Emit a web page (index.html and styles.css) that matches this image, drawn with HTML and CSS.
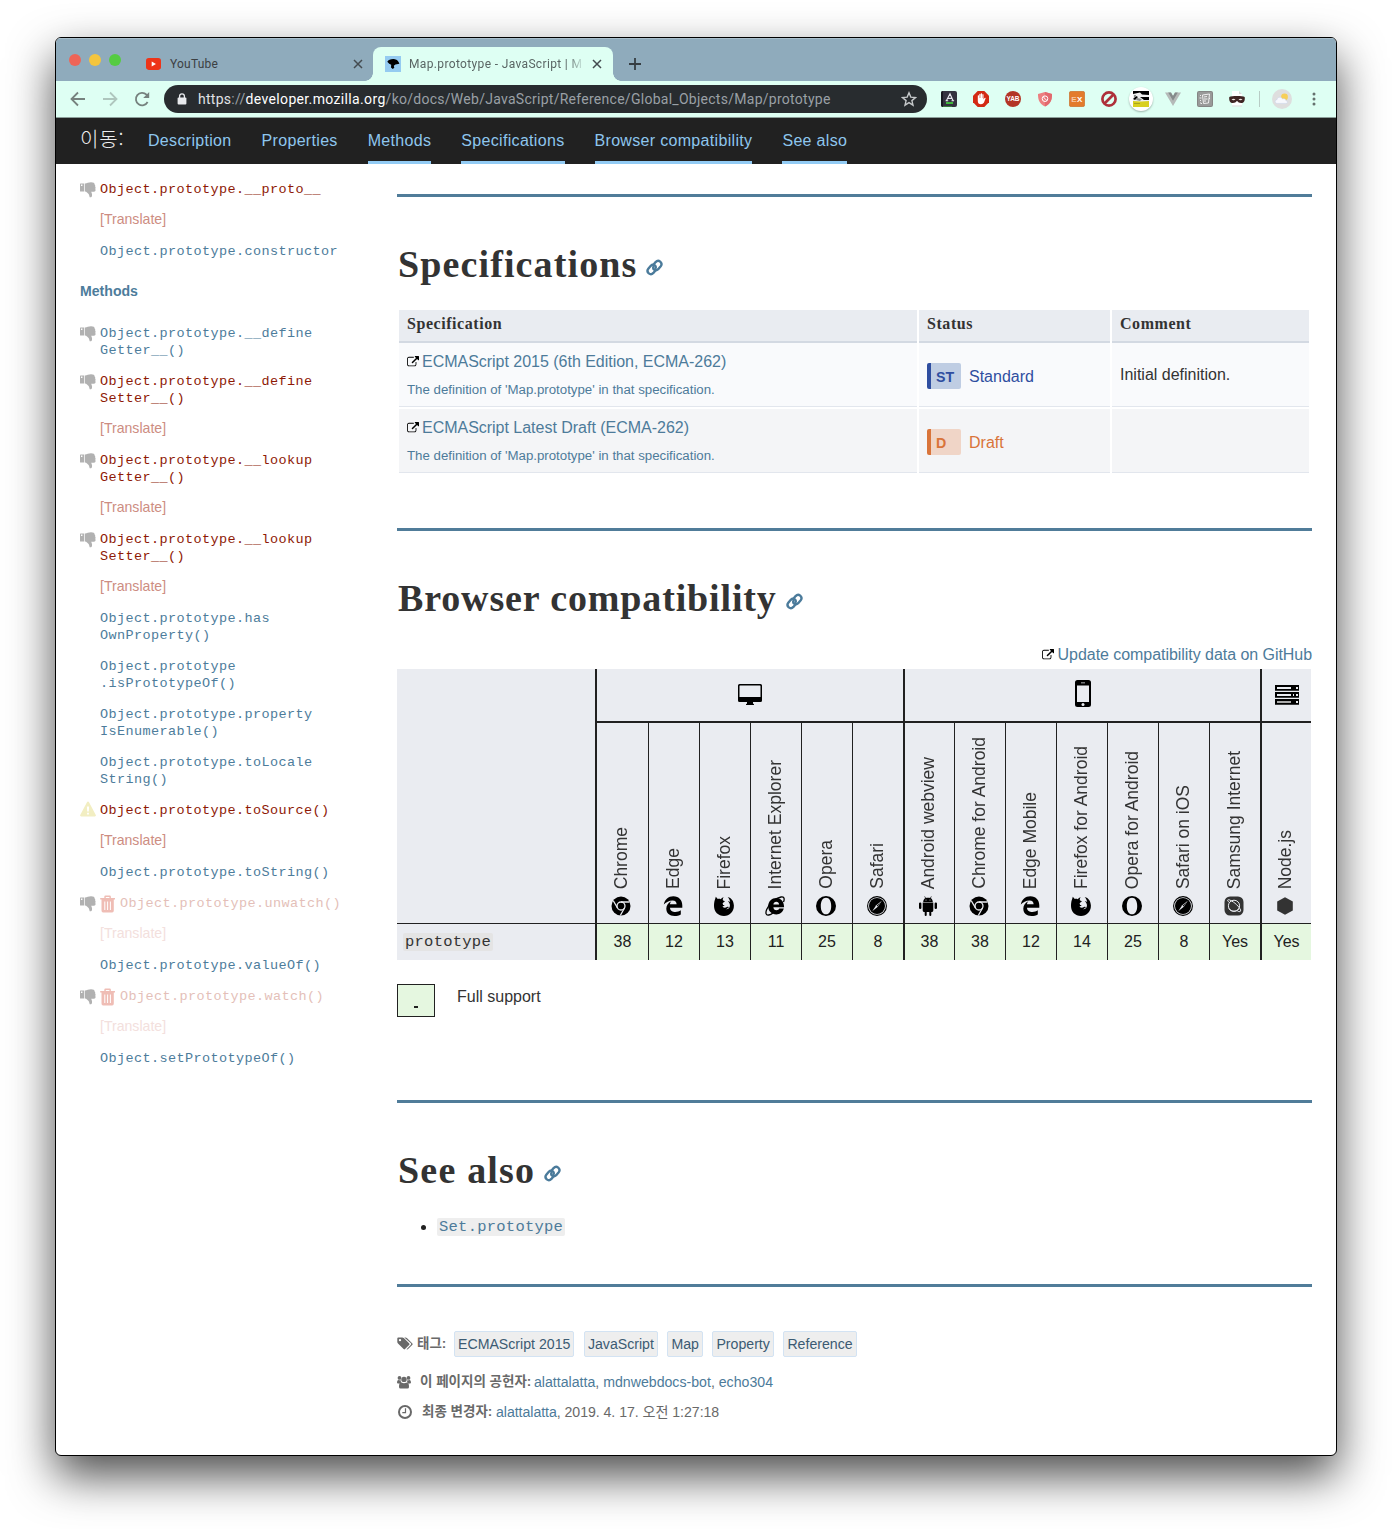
FILE: index.html
```html
<!DOCTYPE html>
<html lang="ko">
<head>
<meta charset="utf-8">
<title>Map.prototype - JavaScript | MDN</title>
<link rel="stylesheet" href="styles.css">
</head>
<body>
<svg width="0" height="0" class="defs">
  <symbol id="ext" viewBox="0 0 1792 1792"><path d="M1408 928v320q0 119-84.5 203.5t-203.5 84.5h-832q-119 0-203.5-84.5t-84.5-203.5v-832q0-119 84.5-203.5t203.5-84.5h704q14 0 23 9t9 23v64q0 14-9 23t-23 9h-704q-66 0-113 47t-47 113v832q0 66 47 113t113 47h832q66 0 113-47t47-113v-320q0-14 9-23t23-9h64q14 0 23 9t9 23zm384-864v512q0 26-19 45t-45 19-45-19l-176-176-652 652q-10 10-23 10t-23-10l-114-114q-10-10-10-23t10-23l652-652-176-176q-19-19-19-45t19-45 45-19h512q26 0 45 19t19 45z"/></symbol>
  <symbol id="link" viewBox="0 0 17 17"><g fill="none" stroke="#4b7b9b" stroke-width="2.400" stroke-linecap="round"><path d="M7.400 5.800L9.600 3.100Q11.800.8 14.200 2.600Q16.600 4.800 14.700 7.200L12.200 10.200Q10.300 12.100 8.100 10.600Q6.800 9.500 7.400 7.900"/><path d="M9.600 11.200L7.400 13.900Q5.200 16.200 2.800 14.400Q.4 12.200 2.300 9.800L4.800 6.800Q6.700 4.900 8.900 6.400Q10.200 7.500 9.600 9.100"/></g></symbol>
  <symbol id="down" viewBox="0 0 16 16"><path fill-rule="evenodd" d="M.5 1.500h3.800v8H.5Q0 9.500 0 9V2q0-.5.5-.5zM1 2.400v1.600h1.400V2.400z"/><path d="M5 1.600C7 1.500 8.500.3 11 .3c2.500 0 3.700.7 3.600 2.200.7.500.8 1.300.5 2 .6.700.6 1.500.2 2.200.7 1.700 0 3-1.500 3h-2.600c.3 1 1.200 2.200.8 4-.2 1.400-1.200 1.900-2.300 1.500-.5-1.200-.4-2.500-1.100-3.200C7.500 11 6.700 9.700 5 9.500z"/></symbol>
  <symbol id="trash" viewBox="0 0 16 18"><path fill-rule="evenodd" d="M4.300 3V1.700Q4.300.5 5.500.5h4.200q1.200 0 1.200 1.200V3H15v1.600h-1.200V15.500q0 2-1.600 2H3.100q-1.600 0-1.600-2V4.600H.2V3zm1.500 0h3.600V2H5.800zM4.300 6.500v8.500h1V6.500zm2.800 0v8.500h1V6.500zm2.800 0v8.500h1V6.500z"/></symbol>
  <symbol id="warn" viewBox="0 0 16 16"><path fill-rule="evenodd" d="M8 .5q.6 0 .9.600l6.900 12.900q.5 1.300-.9 1.400H1.100Q-.3 15.300.2 14L7.100 1.100Q7.400.5 8 .5zM6.900 5.500l.3 5h1.600l.3-5zM7.100 11.700v1.900h1.800v-1.900z"/></symbol>
  <symbol id="chrome" viewBox="0 0 20 20"><circle cx="10" cy="10" r="9.500"/><g fill="none" stroke="#eaecf1" stroke-width="1.300"><circle cx="10" cy="10" r="4"/><path d="M10 6h8.500M6.500 12L2.300 4.700M13.500 12l-4.200 7.500"/></g></symbol>
  <symbol id="edge" viewBox="0 0 20 20"><path d="M.8 8.600C1.800 3.500 5.400.3 10.300.3c5.800 0 9 4 9 9.200v2.200H7c.1 3 2.700 4.200 5.400 4.200 2.100 0 3.800-.6 5.400-1.600v4.200c-1.800 1-3.900 1.500-6.300 1.500-5 0-8.200-2.700-8.200-7.400 0-3.300 2-6 5-7.400C7.400 6.200 7 7.200 6.900 8.300h6.700c0-2.500-1.300-3.900-4-3.900C6 4.400 2.900 6 .8 8.600z"/></symbol>
  <symbol id="firefox" viewBox="0 0 20 20"><path d="M1 3.500L1.800.8l2 2.100C5 2.700 6 2.800 6.800 3.200 7.500 2 8.500 1.400 9.600 1.200c-.7.900-.9 1.800-.8 2.700 0 .8 2 .9 2 1.300-.1.900-1.800 1.200-2.200 2.200.2.700.6 1.100.4 1.700.8-.3 1.400 0 1.700.5-.9.2-1.300.8-2.300.9 1.200 1.400 3 1.600 4.500.6 1.200-.7 2.300-.1 2 .3-1.500.3-1.700 1.500-3.300 1.900 3 .2 4.600-1.700 4.300-4.500-.3-2-1.300-3-2.100-3.600 1.200 0 1.900.4 2.400.9C15.800 3.800 14.900 2 13.700.9c3.800.9 6 4 6.200 8.500C20.100 15.500 15.800 20 10 20S0 15.700 0 10c0-2.300.2-4.500 1-6.500z"/></symbol>
  <symbol id="ie" viewBox="0 0 20 20"><path fill-rule="evenodd" d="M3.200 10C3.400 5.200 6.900 2 11.200 2c4.900 0 7.900 3.600 7.900 9.300H8.400c.1 2 1.300 3 3 3 1.500 0 2.400-.7 2.900-1.700h4.500c-1 3.700-3.800 5.800-7.400 5.800-4.900 0-8.400-3.300-8.200-8.400zm5.200-1.600h5.700c-.2-1.600-1.200-2.600-2.800-2.600s-2.700 1-2.900 2.600z"/><path fill="none" stroke="#000" stroke-width="1.300" d="M18.500 6C20 2.200 18.800.5 16 1 11 2 4 8 1.700 13.500.2 17.200 1 19.700 3.800 19c1.400-.3 3-1.200 4.200-2.100"/></symbol>
  <symbol id="opera" viewBox="0 0 20 20"><path fill-rule="evenodd" d="M10 0a10 10 0 110 20 10 10 0 010-20zm0 1.700C6.700 1.700 4.800 5 4.800 10s1.900 8.300 5.200 8.300 5.200-3.300 5.200-8.300-1.900-8.300-5.200-8.300z"/></symbol>
  <symbol id="safari" viewBox="0 0 20 20"><circle cx="10" cy="10" r="9.400" fill="none" stroke="#000" stroke-width="1.100"/><circle cx="10" cy="10" r="8"/><path fill="#eaecf1" d="M14.800 4.800l-4 6-5.600 4.400 4-6z"/><path d="M9.600 9.800L13.800 6l-3.300 4.600z"/></symbol>
  <symbol id="android" viewBox="0 0 20 20"><path d="M5.200 5.900C5.300 4.200 6 3 7.200 2.300L6.400.5l.5-.2.900 1.800c1.300-.5 3.100-.5 4.400 0l.9-1.800.5.200-.8 1.800c1.200.7 1.900 1.900 2 3.600zM4.700 6.600h10.600v8q0 1.400-1.200 1.400h-.8v3q0 1-1 1t-1-1v-3H8.700v3q0 1-1 1t-1-1v-3h-.8q-1.200 0-1.200-1.400zM1 7.500q0-1 1.200-1t1.200 1v4.600q0 1-1.200 1T1 12.100zM16.600 7.500q0-1 1.200-1t1.200 1v4.600q0 1-1.200 1t-1.200-1z"/><circle cx="8" cy="4" r=".5" fill="#eaecf1"/><circle cx="12" cy="4" r=".5" fill="#eaecf1"/></symbol>
  <symbol id="samsung" viewBox="0 0 20 20"><rect x=".5" y=".5" width="19" height="19" rx="5.500" fill="#333"/><g fill="none" stroke="#eaecf1" stroke-width="1"><circle cx="10" cy="9.800" r="5.600"/><path d="M5.300 6.500C2.500 4.200 3.500 3 6 4.100c4.500 2 9.500 6.800 10.600 10 .4 1.800-1.200 1.900-3.200.9"/><path d="M4.600 12.500c3 3.600 7.600 3.400 10.400.3"/></g></symbol>
  <symbol id="node" viewBox="0 0 20 20"><path fill="#333" d="M10 1.200l7.800 4.400v8.800L10 18.800l-7.800-4.400V5.600z"/></symbol>
</svg>

<div class="window">
  <header class="tabstrip">
    <div class="lights"><i class="red"></i><i class="yellow"></i><i class="green"></i></div>
    <div class="tab idle">
      <svg class="yt" viewBox="0 0 14 11"><rect width="14" height="11" rx="2.600" fill="#ee3418"/><path fill="#fff" d="M5.300 3.200v4.600l4-2.300z"/></svg>
      <span class="tab-title">YouTube</span>
      <svg class="close" viewBox="0 0 10 10"><path d="M1 1l8 8M9 1L1 9"/></svg>
    </div>
    <div class="tab active">
      <svg class="fav" viewBox="0 0 16 16"><rect width="16" height="16" fill="#95cbf1"/><path d="M2.300 5.800C3.500 3.600 6.500 2.700 9.800 3.200c2.400.4 3.900 2.200 4.600 4.500l-4 .9-1.600 1.100.5 2.100-1.500 1.100L6 11.400l.2-2.600-2-1z"/></svg>
      <span class="tab-title fade">Map.prototype - JavaScript | M</span>
      <svg class="close" viewBox="0 0 10 10"><path d="M1 1l8 8M9 1L1 9"/></svg>
    </div>
    <svg class="plus" viewBox="0 0 12 12"><path d="M6 0v12M0 6h12"/></svg>
  </header>

  <div class="toolbar">
    <svg class="tool" viewBox="0 0 16 16"><path d="M15 8H2M8 1.500L1.500 8 8 14.500"/></svg>
    <svg class="tool dim" viewBox="0 0 16 16"><path d="M1 8h13M8 1.500L14.500 8 8 14.500"/></svg>
    <svg class="tool" viewBox="0 0 16 16"><path d="M13.600 11A6.200 6.200 0 1112.500 3.700L14.300 5.500"/><path class="solid" d="M15.200 1v6H9.200z"/></svg>
    <div class="omnibox">
      <svg class="lock" viewBox="0 0 10 12"><rect x=".6" y="4.500" width="8.800" height="7" rx="1" fill="#e8eaed"/><path fill="none" stroke="#e8eaed" stroke-width="1.300" d="M2.600 5V3.200a2.400 2.400 0 014.800 0V5"/></svg>
      <span class="url"><span class="scheme">https</span>://<b>developer.mozilla.org</b>/ko/docs/Web/JavaScript/Reference/Global_Objects/Map/prototype</span>
      <svg class="star" viewBox="0 0 16 16"><path d="M8 1.800l1.800 4.300 4.700.4-3.600 3.100 1.100 4.600L8 11.700l-4 2.500 1.100-4.600L1.500 6.500l4.700-.4z"/></svg>
    </div>
    <div class="extensions">
      <svg viewBox="0 0 16 16"><rect width="16" height="16" rx="2" fill="#33323f"/><path fill="#171920" d="M0 2q0-2 2-2v16q-2 0-2-2z"/><path fill="none" stroke="#e6e6ee" stroke-width="1.100" d="M5.500 9.500L9 2.800l3 6.700M6.800 7.400h4M4.600 9.700h2.600M10.500 9.700h2.600"/><path stroke="#45e33c" stroke-width="1.500" d="M5 12h7"/><path stroke="#377b3c" d="M2 15.500h9"/></svg>
      <svg viewBox="0 0 16 16"><path fill="#d32a14" d="M4.700 0h6.600L16 4.700v6.600L11.300 16H4.700L0 11.300V4.700z"/><path fill="#fff" d="M4.800 7.800V4.600q.6-.8 1.200 0V7h.3V3.200q.6-.8 1.200 0V7h.3V2.600q.6-.8 1.200 0V7h.3V3.500q.6-.8 1.200 0v5l1-1.600q.8-.6 1.200.2L11 11.600q-1 1.800-3.200 1.700Q4.900 13.200 4.800 10z"/></svg>
      <svg viewBox="0 0 16 16"><circle cx="8" cy="8" r="8" fill="#b33526"/><text x="8" y="10.300" class="badge-text yab">YAB</text></svg>
      <svg viewBox="0 0 16 16"><path fill="#ec7f80" d="M8 1l7 2c0 6-1.500 10-7 12.500C2.500 13 1 9 1 3z"/><path fill="#e2696e" d="M8 1l7 2c0 6-1.500 10-7 12.500z"/><g fill="none" stroke="#fff" stroke-width="1"><circle cx="8" cy="7.700" r="2.800"/><path d="M6.200 5.900l3.700 3.600"/></g></svg>
      <svg viewBox="0 0 16 16"><rect x=".3" y=".3" width="15.400" height="15.400" rx="2" fill="#e37b2c" stroke="#bf6926" stroke-width=".6"/><text x="5" y="11" class="badge-text ex pale">E</text><text x="10.600" y="11" class="badge-text ex">X</text></svg>
      <svg viewBox="0 0 16 16"><g fill="none" stroke="#ae303a" stroke-width="2.700"><circle cx="8" cy="8" r="6.600"/><path d="M12.500 3.500l-9 9"/></g></svg>
      <span class="round"><svg viewBox="0 0 16 16"><path d="M0 0h16v16H0z" fill="#eee"/><path d="M0 0h16v4L9 3.500 7 1.500 0 3zM7 6h9v3H11zM0 8l3-3 2 1-3 3z"/><path fill="#8b908c" d="M1 4h2v2H1zM4 7l5 1-2 2-4-1z"/><path fill="#d8cf1f" d="M0 10l8 .5 8-.5v6H0z"/><path fill="#a7a322" d="M1 12h6v1H1z"/></svg></span>
      <svg viewBox="0 0 16 16"><path fill="#b5bab8" d="M0 1.500h6L8 5l2-3.500h6L8 15z"/><path fill="#858b8b" d="M3.200 1.500H6L8 5l2-3.500h2.800L8 9.800z"/></svg>
      <svg viewBox="0 0 16 16"><rect width="16" height="16" rx="2" fill="#858685"/><rect x="1" y="1" width="14" height="14" rx="1" fill="#999a99"/><path fill="none" stroke="#f0f0f0" stroke-width="1" d="M5.500 4l7-1-1 9-5 .5zM7 6l3-.5M7 8h3.500M7 10h2M3 4l1 1M2.500 7h2M3 10l1-1M4 13l1-1M13 7l-1 1M3 12h1"/></svg>
      <svg viewBox="0 0 16 16"><path fill="#fff" d="M3 0h7l3 3v12.500H3z"/><path fill="#d5dcd9" d="M10 0l3 3h-3zM3 14.500h10v1H3z"/><path fill="#3e2423" d="M.3 6c2-1.200 13.400-1.200 15.400 0 .5 3-.6 5.800-2.500 6-2.700.4-3.800-.6-5.200-2.200-1.400 1.600-2.500 2.600-5.200 2.200C.9 11.800-.2 9 .3 6z"/><path fill="#f2e8e4" d="M2.500 8.500q2-1.700 4 0-2 1.500-4 0zM9.500 8.500q2-1.700 4 0-2 1.500-4 0z"/></svg>
    </div>
    <i class="divider"></i>
    <svg class="avatar" viewBox="0 0 20 20"><circle cx="10" cy="10" r="10" fill="#dedede"/><circle cx="12.500" cy="8" r="3.400" fill="#f7cf58"/><path fill="#f7f8fd" stroke="#c5cfe8" stroke-width=".5" d="M5.300 14.400C2.500 14.300 2.500 11 5 10.700 5.300 7.700 9.500 7.500 10.500 10c2-1 3.500.2 3.400 1.700 2.200.2 1.900 2.700 0 2.700z"/></svg>
    <svg class="menu" viewBox="0 0 4 14"><circle cx="2" cy="2" r="1.500"/><circle cx="2" cy="7" r="1.500"/><circle cx="2" cy="12" r="1.500"/></svg>
  </div>

  <nav class="jump">
    <span class="jump-label">이동:</span>
    <a>Description</a><a>Properties</a><a class="on">Methods</a><a class="on">Specifications</a><a class="on">Browser compatibility</a><a class="on">See also</a>
  </nav>

  <div class="page">
    <aside class="sidebar">
      <p class="missing"><svg class="mark"><use href="#down"/></svg>Object.prototype.__proto__</p>
      <p class="translate">[Translate]</p>
      <p>Object.prototype.constructor</p>
      <h4>Methods</h4>
      <p><svg class="mark"><use href="#down"/></svg>Object.prototype.__define<br>Getter__()</p>
      <p class="missing"><svg class="mark"><use href="#down"/></svg>Object.prototype.__define<br>Setter__()</p>
      <p class="translate">[Translate]</p>
      <p class="missing"><svg class="mark"><use href="#down"/></svg>Object.prototype.__lookup<br>Getter__()</p>
      <p class="translate">[Translate]</p>
      <p class="missing"><svg class="mark"><use href="#down"/></svg>Object.prototype.__lookup<br>Setter__()</p>
      <p class="translate">[Translate]</p>
      <p>Object.prototype.has<br>OwnProperty()</p>
      <p>Object.prototype<br>.isPrototypeOf()</p>
      <p>Object.prototype.property<br>IsEnumerable()</p>
      <p>Object.prototype.toLocale<br>String()</p>
      <p class="missing"><svg class="mark warn"><use href="#warn"/></svg>Object.prototype.toSource()</p>
      <p class="translate">[Translate]</p>
      <p>Object.prototype.toString()</p>
      <p class="gone"><svg class="mark"><use href="#down"/></svg><svg class="trash"><use href="#trash"/></svg>Object.prototype.unwatch()</p>
      <p class="translate faint">[Translate]</p>
      <p>Object.prototype.valueOf()</p>
      <p class="gone"><svg class="mark"><use href="#down"/></svg><svg class="trash"><use href="#trash"/></svg>Object.prototype.watch()</p>
      <p class="translate faint">[Translate]</p>
      <p>Object.setPrototypeOf()</p>
    </aside>

    <main>
      <section class="specs">
        <h2><span class="t-spec">Specifications</span><svg class="anchor"><use href="#link"/></svg></h2>
        <div class="spec-table">
          <div class="th">Specification</div><div class="th">Status</div><div class="th">Comment</div>
          <div class="td">
            <a class="spec-link"><svg class="ext"><use href="#ext"/></svg>ECMAScript 2015 (6th Edition, ECMA-262)</a>
            <small>The definition of 'Map.prototype' in that specification.</small>
          </div>
          <div class="td status standard"><b>ST</b><span>Standard</span></div>
          <div class="td comment">Initial definition.</div>
          <div class="td even">
            <a class="spec-link"><svg class="ext"><use href="#ext"/></svg>ECMAScript Latest Draft (ECMA-262)</a>
            <small>The definition of 'Map.prototype' in that specification.</small>
          </div>
          <div class="td even status draft"><b>D</b><span>Draft</span></div>
          <div class="td even"></div>
        </div>
      </section>

      <section class="compat">
        <h2><span class="t-compat">Browser compatibility</span><svg class="anchor"><use href="#link"/></svg></h2>
        <a class="update"><svg class="ext"><use href="#ext"/></svg>Update compatibility data on GitHub</a>
        <div class="compat-table">
          <div class="corner"></div>
          <div class="platform desktop"><svg width="24" height="22" viewBox="0 0 24 22"><path fill-rule="evenodd" d="M1.500 0h21Q24 0 24 1.500v15q0 1.500-1.500 1.500H15v1.500l1 .7V21H8v-.8l1-.7V18H1.500Q0 18 0 16.500v-15Q0 0 1.500 0zM2 1.500q-.5 0-.5.500v11h21V2q0-.5-.5-.5z"/></svg></div>
          <div class="platform mobile"><svg width="16" height="27" viewBox="0 0 16 27"><path fill-rule="evenodd" d="M2.500 0h11Q16 0 16 2.500v22q0 2.500-2.500 2.500h-11Q0 27 0 24.500v-22Q0 0 2.500 0zM2 5.500v16.500h12V5.500zM6 2.500v.8h4v-.8z"/><circle cx="8" cy="24.500" r="1.500" fill="#eaecf1"/></svg></div>
          <div class="platform server"><svg width="24" height="20" viewBox="0 0 24 20"><path d="M0 0h24v5.800H0zM0 7h24v5.800H0zM0 14h24v5.800H0z"/><path fill="#eaecf1" d="M2 2h14v2H2zM2 9h14v2H2zM21 2h2v2h-2zM18 9h1v2H18zM21 9h2v2h-2zM21 16h2v2h-2z"/><path fill="#aaa" d="M2 16h14v2H2z"/></svg></div>

          <div class="browser group"><span>Chrome</span><svg><use href="#chrome"/></svg></div>
          <div class="browser"><span>Edge</span><svg><use href="#edge"/></svg></div>
          <div class="browser"><span>Firefox</span><svg><use href="#firefox"/></svg></div>
          <div class="browser"><span>Internet Explorer</span><svg><use href="#ie"/></svg></div>
          <div class="browser"><span>Opera</span><svg><use href="#opera"/></svg></div>
          <div class="browser"><span>Safari</span><svg><use href="#safari"/></svg></div>
          <div class="browser group"><span>Android webview</span><svg><use href="#android"/></svg></div>
          <div class="browser"><span>Chrome for Android</span><svg><use href="#chrome"/></svg></div>
          <div class="browser"><span>Edge Mobile</span><svg><use href="#edge"/></svg></div>
          <div class="browser"><span>Firefox for Android</span><svg><use href="#firefox"/></svg></div>
          <div class="browser"><span>Opera for Android</span><svg><use href="#opera"/></svg></div>
          <div class="browser"><span>Safari on iOS</span><svg><use href="#safari"/></svg></div>
          <div class="browser"><span>Samsung Internet</span><svg><use href="#samsung"/></svg></div>
          <div class="browser group"><span>Node.js</span><svg><use href="#node"/></svg></div>

          <div class="feature"><code>prototype</code></div>
          <div class="yes group">38</div><div class="yes">12</div><div class="yes">13</div><div class="yes">11</div><div class="yes">25</div><div class="yes">8</div>
          <div class="yes group">38</div><div class="yes">38</div><div class="yes">12</div><div class="yes">14</div><div class="yes">25</div><div class="yes">8</div><div class="yes">Yes</div>
          <div class="yes group">Yes</div>
        </div>
        <div class="legend"><i><span></span></i><p>Full support</p></div>
      </section>

      <section class="see">
        <h2><span class="t-see">See also</span><svg class="anchor"><use href="#link"/></svg></h2>
        <div class="bullet"><i></i><code>Set.prototype</code></div>
      </section>

      <footer>
        <div class="tags">
          <svg viewBox="0 0 16 14"><path fill-rule="evenodd" d="M.3 1.500Q.3.5 1.300.5h4q.9 0 1.500.6l5.500 5.300q.6.700 0 1.400l-4.300 4.300q-.7.600-1.400 0L1 6.600q-.7-.7-.7-1.500zM3 1.900a1.200 1.200 0 100 2.400 1.200 1.200 0 000-2.400z"/><path d="M7.300.5h1.100q.9 0 1.500.6l5.500 5.300q.6.700 0 1.400l-4.300 4.300q-.8.700-1.500.1l4.300-4.400q.7-.7 0-1.500z"/></svg>
          <b>태그:</b><a>ECMAScript 2015</a><a>JavaScript</a><a>Map</a><a>Property</a><a>Reference</a>
        </div>
        <div class="meta people">
          <svg viewBox="0 0 14 14"><circle cx="2.500" cy="2.900" r="1.900"/><circle cx="11.500" cy="2.900" r="1.900"/><circle cx="7" cy="4.400" r="2.700"/><path d="M0 7.500Q0 4.700 1.500 4.900q1 .6 2.200.3-.2 1.500.9 2.500-1.400 0-2 .8H1q-1 0-1-1zM14 7.500q0-2.800-1.500-2.600-1 .6-2.200.3.2 1.500-.9 2.500 1.400 0 2 .8H13q1 0 1-1zM2 12q-.1-4.600 2.400-4.500 2.600 1.500 5.200 0Q12.100 7.400 12 12q0 1.500-1.500 1.500h-7Q2 13.500 2 12z"/></svg>
          <b>이 페이지의 공헌자:</b><p><a>alattalatta</a>, <a>mdnwebdocs-bot</a>, <a>echo304</a></p>
        </div>
        <div class="meta date">
          <svg viewBox="0 0 14 14"><g fill="none" stroke="#696969"><circle cx="7" cy="7" r="6" stroke-width="2"/><path stroke-width="1.200" d="M7.500 3.300v4.300H4.300"/></g></svg>
          <b>최종 변경자:</b><p><a>alattalatta</a>, 2019. 4. 17. 오전 1:27:18</p>
        </div>
      </footer>
    </main>
  </div>
</div>
</body>
</html>
```

FILE: styles.css
```css
* { box-sizing: border-box; }
body {
  margin: 0;
  padding: 37px 55px 73px;
  background: #fff;
  color: #333;
  font: 16px/24px "Liberation Sans", "Noto Sans CJK KR", sans-serif;
  overflow: hidden;
}
p, h2, h4 { margin: 0; }
svg { display: block; flex: none; }
.defs { position: absolute; }
a { color: #4d7b9a; }
.window {
  width: 1282px;
  height: 1419px;
  border: 1px solid #000;
  border-radius: 6px;
  background: #fff;
  overflow: hidden;
  box-shadow: 0 20px 46px rgba(0, 0, 0, .7);
}

/* Tabs */
.tabstrip {
  display: flex;
  height: 43px;
  background: #8fabbc;
  border-top: 1px solid #a9bfcc;
  font: 12px/16px Roboto, sans-serif;
  letter-spacing: .3px;
  color: #3c4043;
}
.lights { display: flex; gap: 8px; padding: 15px 0 0 13px; width: 81px; }
.lights i { width: 12px; height: 12px; border-radius: 50%; }
.red { background: #ee6457; }
.yellow { background: #f4c53d; }
.green { background: #55cc42; }
.tab { display: flex; align-items: center; height: 34px; margin-top: 8px; }
.idle { width: 236px; padding: 0 10px 0 9px; }
.yt { width: 15px; height: 12px; margin-right: 9px; }
.tab-title { flex: 1; white-space: nowrap; }
.idle .tab-title { letter-spacing: .2px; }
.close { width: 10px; height: 10px; fill: none; stroke: #444b50; stroke-width: 1.500; }
.active {
  width: 240px;
  padding: 0 11px 0 12px;
  border-radius: 8px 8px 0 0;
  background: #defff3;
  position: relative;
  color: #5a6664;
}
.active::before, .active::after {
  content: "";
  position: absolute;
  bottom: 0;
  width: 8px;
  height: 8px;
}
.active::before { left: -8px; background: radial-gradient(circle at 0 0, transparent 7.500px, #defff3 8px); }
.active::after { right: -8px; background: radial-gradient(circle at 100% 0, transparent 7.500px, #defff3 8px); }
.fav { width: 16px; height: 16px; margin-right: 8px; }
.fade {
  width: 176px;
  margin-right: 7px;
  letter-spacing: .35px;
  -webkit-mask-image: linear-gradient(90deg, #000 90%, transparent);
  mask-image: linear-gradient(90deg, #000 90%, transparent);
}
.plus { width: 12px; height: 12px; margin: 19px 0 0 16px; stroke: #353d42; stroke-width: 1.800; }

/* Toolbar */
.toolbar {
  display: flex;
  align-items: center;
  height: 37px;
  padding-left: 14px;
  background: #defff3;
  border-bottom: 1px solid #8c9f99;
}
.tool { width: 16px; height: 16px; margin-right: 16px; fill: none; stroke: #76827e; stroke-width: 1.800; }
.tool .solid { fill: #76827e; stroke: none; }
.dim { opacity: .45; }
.omnibox {
  display: flex;
  align-items: center;
  width: 763px;
  height: 28px;
  margin-left: -2px;
  padding: 0 10px 0 13px;
  border-radius: 14px;
  background: #282c2f;
  color: #9aa0a6;
}
.lock { width: 10px; height: 12px; margin-right: 11px; }
.url { flex: 1; white-space: nowrap; font: 14px/20px Roboto, sans-serif; letter-spacing: .27px; }
.url b { font-weight: 400; color: #fff; letter-spacing: .35px; }
.scheme { color: #e0e2e5; }
.star { width: 16px; height: 16px; fill: none; stroke: #c5c8ca; stroke-width: 1.400; }
.extensions { display: flex; gap: 16px; align-items: center; margin-left: 14px; }
.extensions svg { width: 16px; height: 16px; }
.round {
  width: 24px;
  height: 24px;
  margin: 0 -4px;
  padding: 4px;
  border-radius: 50%;
  background: #fff;
  box-shadow: 0 1px 2px rgba(0, 0, 0, .3);
}
.badge-text { fill: #fff; font: 900 6.500px "Liberation Sans", sans-serif; text-anchor: middle; }
.ex { font-size: 8px; }
.pale { fill: #f6c9a4; }
.divider { width: 1px; height: 16px; margin: 0 12px 0 14px; background: #b8ccc5; }
.avatar { width: 20px; height: 20px; }
.menu { width: 4px; height: 14px; margin-left: 20px; fill: #65706d; }

/* Section links */
.jump {
  display: flex;
  gap: 30px;
  height: 46px;
  padding-left: 24px;
  background: #212121;
  line-height: 45px;
  letter-spacing: .32px;
}
.jump a { height: 46px; white-space: nowrap; color: #8ec6ee; }
.jump .on { border-bottom: 3px solid #92cbf4; }
.jump-label { width: 38px; color: #eee; font-size: 20px; font-weight: 300; line-height: 42px; white-space: nowrap; font-family: "Noto Sans CJK KR", sans-serif; letter-spacing: .8px; }

/* Sidebar */
.page { display: flex; }
.sidebar { width: 341px; padding: 17px 0 0 44px; color: #4d7c9b; font: 13.500px/17px "Courier New", "Liberation Mono", monospace; letter-spacing: .4px; }
.sidebar p { position: relative; margin-bottom: 14px; white-space: nowrap; }
.sidebar h4 { margin: 22.500px 0 25.500px -20px; font: 700 14.100px/17px "Liberation Sans", sans-serif; letter-spacing: 0; }
.sidebar .missing { color: #8e1905; }
.sidebar .translate { top: -1px; color: #cd8d82; font: 14.100px/17px "Liberation Sans", sans-serif; letter-spacing: 0; }
.sidebar .faint { color: #f3e0dd; }
.sidebar .gone { padding-left: 20px; color: #e4bfb9; }
.mark { position: absolute; left: -20px; top: 1px; width: 16px; height: 16px; fill: #b1b1b1; }
.mark.warn { top: -1px; fill: #f2eec2; }
.trash { position: absolute; left: 0; top: 0; width: 16px; height: 18px; fill: #efbdb5; }

/* Article */
main { width: 915px; padding-top: 30px; }
section { padding-top: 47px; border-top: 3px solid #507c99; }
.specs { height: 334px; }
.compat { height: 572px; }
.see { height: 184px; }
h2 { display: flex; height: 40px; padding-left: 1px; font: 700 38px/40px Palatino, "Palatino Linotype", "Liberation Serif", serif; }
.t-spec { width: 248px; letter-spacing: 1.120px; }
.t-compat { width: 388px; letter-spacing: .860px; }
.t-see { width: 146px; letter-spacing: 1.200px; }
.anchor { width: 17px; height: 17px; margin-top: 15px; }
.ext { width: 12px; height: 12px; fill: #000; }
code { font: 15.500px/18px "Courier New", "Liberation Mono", monospace; letter-spacing: .25px; padding: 0 2px; background: #e4e4e4; border-radius: 2px; }

.spec-table { display: grid; grid-template-columns: 518px 191px 197px; grid-template-rows: 33px 64px 64px; column-gap: 2px; margin: 26px 0 0 2px; }
.th { padding-left: 8px; background: #e9ecf1; border-bottom: 2px solid #d3d9e2; font: 700 16px/28px Palatino, "Liberation Serif", serif; letter-spacing: .55px; }
.td { display: flex; flex-direction: column; padding-left: 8px; background: #f9fafc; border-bottom: 1px solid #e2e6ed; }
.even { background: #f4f5f7; margin-top: 2px; margin-bottom: -2px; }
.spec-link { display: flex; align-items: center; gap: 3px; height: 24px; margin-top: 7px; white-space: nowrap; letter-spacing: -.02px; }
.spec-link svg { margin-top: -1px; }
small { margin-top: 6px; font-size: 13.250px; line-height: 20px; color: #4d7b9a; white-space: nowrap; }
.status { flex-direction: row; align-items: center; padding-top: 3px; }
.status b { width: 34px; height: 26px; margin-right: 8px; padding-left: 5px; border-left: 4px solid; border-radius: 2px; font-size: 14.220px; line-height: 28px; }
.status span { padding-top: 2px; }
.standard { color: #2f4ea0; }
.standard b { background: #bfcde3; }
.draft { color: #d9743a; }
.draft b { background: #f0d5c7; }
.comment { justify-content: center; }

.update { display: flex; align-items: center; justify-content: flex-end; gap: 4px; height: 24px; margin: 25px 0 2px; letter-spacing: -.05px; }
.update svg { margin-top: -1px; }
.compat-table { display: grid; grid-template-columns: 198px 53px repeat(13, 51px); grid-template-rows: 54px 200px 37px; width: 914px; background: #eaecf1; }
.corner { grid-row: 1 / 3; }
.platform { display: flex; justify-content: center; align-items: center; border-left: 2px solid #212121; border-bottom: 2px solid #212121; }
.desktop { grid-column: 2 / 8; }
.mobile { grid-column: 8 / 15; padding-bottom: 3px; }
.browser { display: flex; flex-direction: column; justify-content: flex-end; align-items: center; gap: 7px; padding: 0 2px 7px 0; border-left: 1px solid #212121; font-size: 17.500px; line-height: 20px; }
.browser span { writing-mode: vertical-rl; transform: rotate(180deg); white-space: nowrap; }
.browser svg { width: 20px; height: 20px; }
.group { border-left: 2px solid #212121; }
.browser.group { padding-right: 3px; }
.feature { padding: 5px 6px; border-top: 1px solid #212121; }
.yes { border-left: 1px solid #212121; border-top: 1px solid #212121; background: #e5f7e0; color: #212121; text-align: center; line-height: 35px; }
.yes.group { border-left-width: 2px; }
.legend { display: flex; margin-top: 24px; }
.legend i { width: 38px; height: 33px; padding: 21px 0 0 16px; border: 1px solid #212121; background: #e5f7e0; }
.legend span { display: block; width: 4px; height: 2px; background: #212121; }
.legend p { margin: 1px 0 0 22px; }

.bullet { display: flex; align-items: center; height: 24px; margin: 25px 0 0 24px; }
.bullet i { width: 5px; height: 5px; margin-right: 11px; border-radius: 50%; background: #222; }
.bullet code { color: #4d7b9a; background: #eee; }

footer { border-top: 3px solid #507c99; padding-top: 44px; font-size: 14.150px; color: #696969; }
footer svg { fill: #696969; }
.tags { display: flex; align-items: center; height: 26px; }
.tags svg { width: 16px; height: 14px; margin-right: 4px; }
.tags b { width: 37px; font-size: 13.500px; white-space: nowrap; }
.tags a { height: 26px; margin-right: 9.500px; padding: 0 3px; border: 1px solid #d3e3f3; border-radius: 2px; background: #eee; color: #3c5b73; line-height: 25px; white-space: nowrap; }
.meta { display: flex; align-items: center; height: 30px; white-space: nowrap; }
.people { margin-top: 10px; }
.people svg { width: 14px; height: 14px; margin-right: 9px; }
.meta b { font-size: 13.500px; }
.people b { width: 114px; }
.date b { width: 74px; }
.date p { letter-spacing: -.05px; }
.date svg { width: 14px; height: 14px; margin: 0 10px 0 1px; }
```
